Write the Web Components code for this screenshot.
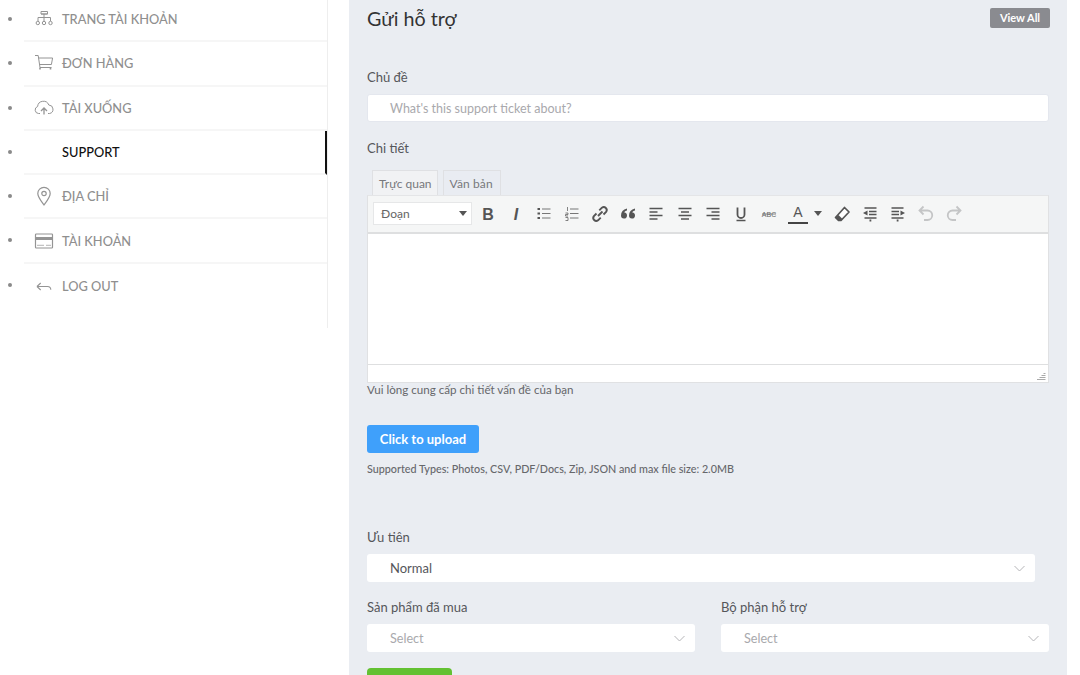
<!DOCTYPE html>
<html lang="vi">
<head>
<meta charset="utf-8">
<title>Gửi hỗ trợ</title>
<style>
  html, body { margin: 0; height: 675px; overflow: hidden; background: #fff; }
  body { font-family: "Lato", "Liberation Sans", sans-serif; }
</style>
</head>
<body>
<account-page>
  <side-nav slot="nav">
    <nav-item icon="tree">TRANG TÀI KHOẢN</nav-item>
    <nav-item icon="cart">ĐƠN HÀNG</nav-item>
    <nav-item icon="cloud">TẢI XUỐNG</nav-item>
    <nav-item active>SUPPORT</nav-item>
    <nav-item icon="pin">ĐỊA CHỈ</nav-item>
    <nav-item icon="card">TÀI KHOẢN</nav-item>
    <nav-item icon="back" last>LOG OUT</nav-item>
  </side-nav>
  <ticket-form slot="main"></ticket-form>
</account-page>

<script>
const NAV_ICONS = {
  tree: '<path d="M7 2.500h6.500v2.500H7zM7 5h6.500M10 5v3.500M4 12V8.500h12.500V12M10 8.500V12"/><circle cx="3.800" cy="14" r="1.700"/><circle cx="10" cy="14" r="1.700"/><circle cx="16.500" cy="14" r="1.700"/>',
  cart: '<path d="M1 2.500h3.200l1.800 12h11.500M4.600 5h14l-1.200 6.500H5.500"/><path d="M6 14.500v2M16.500 14.500v2" stroke-width="1.600"/>',
  cloud: '<path d="M6 15.500H4.600A3.600 3.600 0 0 1 3.600 8.500 5.800 5.800 0 0 1 14.800 7 4.300 4.300 0 0 1 15.600 15.500H14"/><path d="M10 16.500V10M7 13l3-3 3 3" stroke-width="1.300"/>',
  pin: '<path d="M10 19C6.300 14 3.800 11 3.800 7.500a6.200 6.200 0 0 1 12.400 0C16.200 11 13.700 14 10 19z" stroke-width="1.200"/><circle cx="10" cy="7.500" r="2.200" stroke-width="1.200"/>',
  card: '<rect x="1.500" y="3" width="17" height="14" rx=".8" stroke-width="1.200"/><path d="M1.500 7.500h17" stroke-width="3"/><path d="M3 14.300h7M12 14.300h5" stroke-width=".7"/>',
  back: '<path d="M3 10.500h10.500c2 0 3.300 1.200 3.300 3.300M3 10.500l3.700-3.500M3 10.500 6.700 14" stroke-width="1.100"/>'
};

class NavItem extends HTMLElement {
  constructor() {
    super();
    this.attachShadow({ mode: "open" });
  }
  connectedCallback() {
    const icon = NAV_ICONS[this.getAttribute("icon")] || "";
    this.shadowRoot.innerHTML = `
      <style>
        :host {
          display: flex;
          align-items: center;
          height: 44.3px;
          box-sizing: border-box;
          position: relative;
          border-bottom: 2px solid #f6f6f6;
          color: #8f8f8f;
          font-size: 12.8px;
          font-weight: 500;
        }
        :host([last]) { border-bottom: 0; }
        :host([active]) { color: #111; border-right: 2px solid #111; }
        .dot {
          position: absolute;
          left: -16px;
          top: 19px;
          width: 4px;
          height: 4px;
          border-radius: 50%;
          background: #8a8a8a;
        }
        .ico { width: 20px; height: 20px; margin-left: 10px; margin-right: 8px; flex: none; }
        svg { width: 20px; height: 20px; display: block; fill: none; stroke: #949494; stroke-width: 1; }
      </style>
      <span class="dot"></span>
      <span class="ico">${icon ? `<svg viewBox="0 0 20 20">${icon}</svg>` : ""}</span>
      <slot></slot>
    `;
  }
}
customElements.define("nav-item", NavItem);

class SideNav extends HTMLElement {
  constructor() {
    super();
    this.attachShadow({ mode: "open" });
    this.shadowRoot.innerHTML = `
      <style>
        :host {
          display: block;
          box-sizing: border-box;
          width: 328px;
          height: 330px;
          margin-top: -2px;
          padding-left: 24px;
          border-right: 1px solid #eeeeee;
        }
      </style>
      <slot></slot>
    `;
  }
}
customElements.define("side-nav", SideNav);

class AccountPage extends HTMLElement {
  constructor() {
    super();
    this.attachShadow({ mode: "open" });
    this.shadowRoot.innerHTML = `
      <style>
        :host { display: flex; align-items: flex-start; height: 675px; }
        .gap { width: 21px; flex: none; }
        .main { width: 718px; flex: none; height: 675px; overflow: hidden; }
      </style>
      <slot name="nav"></slot>
      <div class="gap"></div>
      <div class="main"><slot name="main"></slot></div>
    `;
  }
}
customElements.define("account-page", AccountPage);

class FormSelect extends HTMLElement {
  constructor() {
    super();
    this.attachShadow({ mode: "open" });
    this.shadowRoot.innerHTML = `
      <style>
        :host {
          display: flex;
          align-items: center;
          justify-content: space-between;
          box-sizing: border-box;
          height: 28px;
          padding: 0 10px 0 23px;
          background: #fff;
          border-radius: 3px;
          font-size: 12.6px;
          color: #a9a9ad;
        }
        :host([filled]) { color: #55565a; font-size: 13px; }
        svg { width: 11px; height: 7px; fill: none; stroke: #b5b5b8; stroke-width: 1; }
      </style>
      <slot></slot>
      <svg viewBox="0 0 11 7"><path d="M.5 1 5.500 6l5-5"/></svg>
    `;
  }
}
customElements.define("form-select", FormSelect);

// toolbar glyphs, 20x20 box like the tinymce ones
const TB_ICONS = [
  ['b', '<text x="10" y="15.500" text-anchor="middle" font-family="Liberation Sans" font-size="16" font-weight="700" fill="#555">B</text>'],
  ['i', '<text x="10" y="15.500" text-anchor="middle" font-family="Liberation Sans" font-size="16" font-weight="700" font-style="italic" fill="#555">I</text>'],
  ['ul', '<path d="M8 5h8.500M8 9.500h8.500M8 14h8.500" stroke="#777" stroke-width="1.200"/><path d="M3.500 5h2.500M3.500 9.500h2.500M3.500 14h2.500" stroke="#555" stroke-width="2"/>'],
  ['ol', '<path d="M8 5h8.500M8 9.500h8.500M8 14h8.500" stroke="#777" stroke-width="1.200"/><path d="M5.500 3v4M3.500 9h2.500v1.500H3.500V12H6M3.500 13.500H6v3H3.500" stroke="#666" stroke-width=".8" fill="none"/>'],
  ['link', '<path d="M8 12l4.500-4.500M6.500 9.500l-2.600 2.600a3 3 0 0 0 4.200 4.200l2.600-2.600M13.500 10.500l2.600-2.600a3 3 0 0 0-4.200-4.200L9.300 6.300" stroke="#555" stroke-width="1.900" fill="none"/>'],
  ['quote', '<path d="M9 4.500C5 5.500 3 8 3 11.500a3 3 0 1 0 3.300-3c.3-.9 1.300-1.700 2.700-2zM17 4.500C13 5.500 11 8 11 11.500a3 3 0 1 0 3.300-3c.3-.9 1.300-1.700 2.700-2z" fill="#555"/>'],
  ['left', '<path d="M3.500 4.500h13M3.500 8h8M3.500 11.500h13M3.500 15h8" stroke="#555" stroke-width="1.600"/>'],
  ['center', '<path d="M3.500 4.500h13M6 8h8M3.500 11.500h13M6 15h8" stroke="#555" stroke-width="1.600"/>'],
  ['right', '<path d="M3.500 4.500h13M8.500 8h8M3.500 11.500h13M8.500 15h8" stroke="#555" stroke-width="1.600"/>'],
  ['u', '<path d="M6.500 3.500v7a3.500 3.500 0 0 0 7 0v-7" stroke="#555" stroke-width="1.800" fill="none"/><path d="M5.500 16.500h9" stroke="#555" stroke-width="1.500"/>'],
  ['strike', '<text x="10" y="12.500" text-anchor="middle" font-family="Liberation Sans" font-size="7" fill="#666">ABC</text><path d="M3 10h14" stroke="#666" stroke-width=".8"/>'],
];
const TB_ICONS2 = [
  ['eraser', '<path d="M12.500 3.500 17 8l-8 8.500H6.500L3.500 13.500z" stroke="#555" stroke-width="1.700" fill="#fff" stroke-linejoin="round"/><path d="M3.500 13.500 6.500 16.500H9l1.500-1.500-4-4z" fill="#555"/>'],
  ['outdent', '<path d="M4.500 4h12M9 7.500h7.500M9 10.500h7.500M4.500 14h12" stroke="#555" stroke-width="1.600"/><path d="M7.500 6.500v5L3 9z" fill="#555"/><path d="M9.500 15.500h1.800v2H9.500z" fill="#555"/>'],
  ['indent', '<path d="M3.500 4h12M3.500 7.500H11M3.500 10.500H11M3.500 14h12" stroke="#555" stroke-width="1.600"/><path d="M12.500 6.500v5L17 9z" fill="#555"/><path d="M8.700 15.500h1.800v2H8.700z" fill="#555"/>'],
  ['undo', '<path d="M3.500 6.500h8a4.700 4.700 0 0 1 0 9.500H8M7.500 2.500l-4 4 4 4" stroke="#c4c5c6" stroke-width="1.800" fill="none"/>'],
  ['redo', '<path d="M16.500 6.500h-8a4.700 4.700 0 0 0 0 9.500H12M12.500 2.500l4 4-4 4" stroke="#c4c5c6" stroke-width="1.800" fill="none"/>'],
];

class EditorToolbar extends HTMLElement {
  constructor() {
    super();
    this.attachShadow({ mode: "open" });
    const btn = ([name, d]) => `<svg class="${name}" viewBox="0 0 20 20">${d}</svg>`;
    this.shadowRoot.innerHTML = `
      <style>
        :host {
          display: flex;
          align-items: center;
          box-sizing: border-box;
          height: 38px;
          padding: 0 4px 1px 5px;
          background: #f5f6f6;
          border-bottom: 2px solid #dedfe0;
          color: #555;
        }
        .format {
          display: flex;
          align-items: center;
          justify-content: space-between;
          box-sizing: border-box;
          width: 99px;
          height: 23px;
          margin-right: 2px;
          padding: 0 4px 0 7px;
          background: #fff;
          border: 1px solid #e6e7e8;
          font-size: 12px;
          color: #666;
        }
        .caret { width: 0; height: 0; border: 4px solid transparent; border-top: 5px solid #555; border-bottom: 0; }
        svg { width: 20px; height: 20px; margin: 0 4px; flex: none; }
        svg.center { margin-left: 5px; }
        .color {
          position: relative;
          width: 20px;
          height: 20px;
          margin: 0 6px 0 5px;
          text-align: center;
          font: 400 14px/17px "Liberation Sans", sans-serif;
          color: #555;
          box-sizing: border-box;
          border-bottom: 2px solid #444;
        }
        .color + .caret { margin-right: 6px; }
      </style>
      <div class="format"><span>Đoạn</span><span class="caret"></span></div>
      ${TB_ICONS.map(btn).join("")}
      <div class="color">A</div><span class="caret"></span>
      ${TB_ICONS2.map(btn).join("")}
    `;
  }
}
customElements.define("editor-toolbar", EditorToolbar);

class RichEditor extends HTMLElement {
  constructor() {
    super();
    this.attachShadow({ mode: "open" });
    this.shadowRoot.innerHTML = `
      <style>
        :host { display: block; font-size: 12px; }
        .tabs { display: flex; gap: 5px; padding-left: 5px; height: 25px; box-sizing: border-box; }
        .tab {
          box-sizing: border-box;
          height: 25px;
          padding: 0 5px 0 6px;
          line-height: 25px;
          border: 1px solid #dfe0e3;
          border-bottom: 0;
          color: #77787c;
          background: #e9ecf2;
        }
        .tab.on { background: #f1f2f4; }
        .tab + .tab { padding: 0 7px 0 6px; letter-spacing: .1px; }
        .box { border: 1px solid #e0e1e3; border-top: 1px solid #e4e5e7; background: #fff; }
        .area { height: 130px; }
        .status { position: relative; height: 17px; border-top: 1px solid #dedfe0; }
        .status svg { position: absolute; right: 2px; bottom: 2px; width: 10px; height: 10px; }
      </style>
      <div class="tabs"><div class="tab on">Trực quan</div><div class="tab">Văn bản</div></div>
      <div class="box">
        <editor-toolbar></editor-toolbar>
        <div class="area"></div>
        <div class="status"><svg viewBox="0 0 10 10"><path d="M1 9.500h8.500M3.500 7.500h6M5.500 5.500h4M7.500 3.500h2" stroke="#aaa" stroke-width="1"/></svg></div>
      </div>
    `;
  }
}
customElements.define("rich-editor", RichEditor);

class TicketForm extends HTMLElement {
  constructor() {
    super();
    this.attachShadow({ mode: "open" });
    this.shadowRoot.innerHTML = `
      <style>
        :host {
          display: block;
          box-sizing: border-box;
          height: 690px;
          padding: 0 18px;
          background: #eaedf2;
          font-size: 12.5px;
          color: #55565a;
        }
        .head { display: flex; justify-content: space-between; align-items: flex-start; height: 69px; }
        h1 { margin: 5px 0 0; font-size: 19.7px; line-height: 28px; font-weight: 400; color: #333; }
        .all {
          margin: 8px -1px 0 0;
          width: 60px;
          height: 20px;
          line-height: 20px;
          text-align: center;
          background: #8a8b90;
          color: #fff;
          border-radius: 2px;
          font-size: 11px;
          font-weight: 700;
        }
        label { display: block; height: 17px; line-height: 17px; margin: 0 0 8px; font-size: 13px; color: #55565a; }
        .input {
          box-sizing: border-box;
          height: 28px;
          line-height: 27px;
          padding-left: 22px;
          background: #fff;
          border: 1px solid #e4e7ee;
          border-radius: 3px;
          color: #a9a9ad;
          margin-bottom: 18px;
        }
        .hint { font-size: 11.6px; line-height: 14px; margin-top: 0; color: #66676b; }
        .upload {
          width: 112px;
          height: 28px;
          margin-top: 28px;
          line-height: 28px;
          text-align: center;
          background: #3fa0fb;
          color: #fff;
          border-radius: 3px;
          font-weight: 700;
          font-size: 13px;
        }
        .types { margin-top: 9px; font-size: 10.75px; line-height: 14px; font-weight: 500; color: #66676b; }
        .pri { margin-top: 53px; }
        .pri form-select { width: 668px; }
        .two { display: grid; grid-template-columns: 328px 328px; gap: 26px; margin-top: 17px; }
        .send {
          width: 85px;
          height: 28px;
          margin-top: 16px;
          line-height: 28px;
          text-align: center;
          background: #63c132;
          color: #fff;
          border-radius: 4px;
          font-weight: 700;
        }
      </style>
      <div class="head"><h1>Gửi hỗ trợ</h1><div class="all">View All</div></div>
      <label>Chủ đề</label>
      <div class="input">What's this support ticket about?</div>
      <label style="margin-bottom:13px">Chi tiết</label>
      <rich-editor></rich-editor>
      <div class="hint">Vui lòng cung cấp chi tiết vấn đề của bạn</div>
      <div class="upload">Click to upload</div>
      <div class="types">Supported Types: Photos, CSV, PDF/Docs, Zip, JSON and max file size: 2.0MB</div>
      <div class="pri"><label>Ưu tiên</label><form-select filled>Normal</form-select></div>
      <div class="two">
        <div><label>Sản phẩm đã mua</label><form-select>Select</form-select></div>
        <div><label>Bộ phận hỗ trợ</label><form-select>Select</form-select></div>
      </div>
      <div class="send">Gửi</div>
    `;
  }
}
customElements.define("ticket-form", TicketForm);
</script>
</body>
</html>
